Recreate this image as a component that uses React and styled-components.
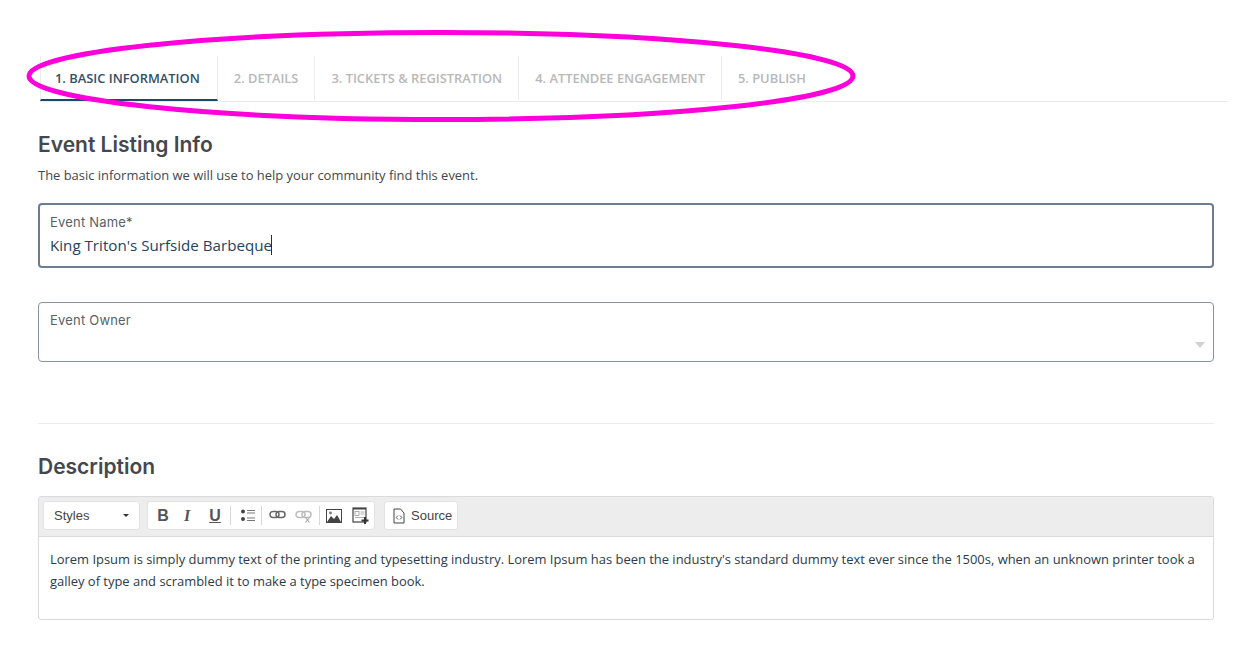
import React from "react";
import styled, { createGlobalStyle } from "styled-components";

const GlobalStyle = createGlobalStyle`
  html, body { margin: 0; padding: 0; background: #fff; }
  body { font-family: "Open Sans", sans-serif; color: #2f3b4a; }
`;

const Page = styled.div`
  position: relative;
  width: 1240px;
  height: 650px;
  overflow: hidden;
  padding: 56px 0 0 38px;
  box-sizing: border-box;
`;

const TabBar = styled.div`
  display: flex;
  width: 1188px;
  height: 46px;
  margin-left: 2px;
  box-sizing: border-box;
  border-bottom: 1px solid #ececec;
`;

const Tab = styled.div`
  height: 45px;
  padding: 1px 16px 0;
  display: flex;
  align-items: center;
  box-sizing: border-box;
  font-size: 12.88px;
  font-weight: 600;
  white-space: nowrap;
  border-right: 1px solid #ececec;
  color: ${(p) => (p.$active ? "#2f4f6b" : "#b8b8b8")};
  border-bottom: 2px solid ${(p) => (p.$active ? "#1d4767" : "transparent")};
  ${(p) => p.$active && "padding-left: 14px; padding-right: 17px; border-left: 1px solid #ececec;"}
  ${(p) => p.$last && "border-right: none;"}
`;

const Content = styled.div`
  width: 1176px;
`;

const Heading = styled.h2`
  font-family: "Inter", sans-serif;
  font-size: 21px;
  line-height: 28px;
  font-weight: 600;
  color: #44484e;
  margin: 29px 0 0;
`;

const Intro = styled.p`
  font-size: 12.94px;
  line-height: 18px;
  margin: 7px 0 0;
  color: #3f4750;
`;

const Field = styled.div`
  position: relative;
  box-sizing: border-box;
  height: ${(p) => (p.$focus ? "65px" : "60px")};
  margin-top: ${(p) => p.$top}px;
  padding: ${(p) => (p.$focus ? "9px 10px" : "9px 11px")};
  border: ${(p) => (p.$focus ? "2px solid #6d7d90" : "1px solid #8794a3")};
  border-radius: 4px;
`;

const FieldLabel = styled.div`
  font-family: "Inter", sans-serif;
  font-size: 13px;
  line-height: 16px;
  letter-spacing: 0.2px;
  color: #5a5f66;
`;

const FieldValue = styled.div`
  display: flex;
  align-items: center;
  font-size: 15.15px;
  line-height: 22px;
  margin-top: 4px;
  color: #23425f;
`;

const Caret = styled.span`
  display: inline-block;
  width: 1px;
  height: 20px;
  margin-left: -1px;
  background: #1c2f44;
`;

const SelectArrow = styled.span`
  position: absolute;
  right: 8px;
  bottom: 13px;
  width: 0;
  height: 0;
  border-left: 5px solid transparent;
  border-right: 5px solid transparent;
  border-top: 6px solid #d0d3d6;
`;

const Rule = styled.hr`
  border: none;
  border-top: 1px solid #ececec;
  margin: 61px 0 0;
`;

const Editor = styled.div`
  margin-top: 15px;
  height: 124px;
  box-sizing: border-box;
  border: 1px solid #d9dbde;
  border-radius: 3px;
  overflow: hidden;
`;

const Toolbar = styled.div`
  display: flex;
  gap: 7px;
  height: 40px;
  box-sizing: border-box;
  padding: 4px;
  background: #ededed;
  border-bottom: 1px solid #d9dbde;
`;

const Group = styled.div`
  display: flex;
  align-items: center;
  height: 29px;
  background: #fff;
  border-radius: 3px;
  border: 1px solid #e2e2e2;
  box-sizing: border-box;
  padding: ${(p) => p.$pad || "0 0 0 4px"};
  margin-left: ${(p) => p.$ml || 0}px;
  width: ${(p) => p.$width};
  font-family: "Liberation Sans", Arial, sans-serif;
  font-size: 13px;
  color: #444;
`;

const StylesLabel = styled.span`
  flex: 1;
`;

const ComboArrow = styled.span`
  width: 0;
  height: 0;
  border-left: 3px solid transparent;
  border-right: 3px solid transparent;
  border-top: 3px solid #333;
`;

const ToolButton = styled.span`
  display: flex;
  align-items: center;
  justify-content: center;
  flex: none;
  box-sizing: border-box;
  width: ${(p) => p.$w}px;
  height: 20px;
  padding: 0 ${(p) => p.$pr || 0}px 0 ${(p) => p.$pl || 0}px;
  font-family: ${(p) => (p.$serif ? '"Liberation Serif", serif' : '"Liberation Sans", Arial, sans-serif')};
  font-size: 16px;
  font-weight: 700;
  font-style: ${(p) => (p.$italic ? "italic" : "normal")};
  text-decoration: ${(p) => (p.$under ? "underline" : "none")};
  color: #555;
`;

const Sep = styled.span`
  flex: none;
  width: 1px;
  height: 19px;
  background: #d8d8d8;
`;

const SourceLabel = styled.span`
  margin-left: 6px;
`;

const EditorBody = styled.div`
  padding: 11px 11px 0;
  font-size: 12.94px;
  line-height: 22px;
  color: #2b3a4c;
`;

const Annotation = styled.svg`
  position: absolute;
  left: 0;
  top: 0;
  pointer-events: none;
`;

function ListIcon() {
  return (
    <svg width="15" height="15" viewBox="0 0 15 15" fill="#444">
      <circle cx="3" cy="3.5" r="2" />
      <circle cx="3" cy="11" r="2" />
      <rect x="7" y="2" width="8" height="1" fill="#777" />
      <rect x="7" y="4.5" width="8" height="1" fill="#777" />
      <rect x="7" y="9.5" width="8" height="1" fill="#777" />
      <rect x="7" y="12" width="8" height="1" fill="#777" />
    </svg>
  );
}

function LinkIcon({ off }) {
  const c = off ? "#bdbdbd" : "#666";
  return (
    <svg width="17" height="15" viewBox="0 0 17 15" fill="none" stroke={c} strokeWidth="1.5">
      <rect x="1" y="3.5" width="9" height="6" rx="3" />
      <rect x="7" y="3.5" width="9" height="6" rx="3" />
      {off && <path d="M10.5 9.5l4 5M14.5 9.5l-4 5" strokeWidth="1.2" stroke="#aaa" />}
    </svg>
  );
}

function ImageIcon() {
  return (
    <svg width="16" height="14" viewBox="0 0 16 14">
      <rect x="0.5" y="0.5" width="15" height="13" fill="#fff" stroke="#444" />
      <path d="M1 13l4-6 3 3 3-4 4 7z" fill="#444" />
      <circle cx="4.5" cy="4" r="1.4" fill="#777" />
    </svg>
  );
}

function BlockIcon() {
  return (
    <svg width="18" height="18" viewBox="0 0 18 18">
      <rect x="1" y="1" width="13" height="14" fill="#fff" stroke="#444" strokeWidth="1.2" />
      <rect x="1" y="1" width="13" height="1.5" fill="#444" />
      <rect x="3" y="4.5" width="4" height="4" fill="none" stroke="#999" strokeWidth="0.8" />
      <path d="M8.5 5h4M8.5 7h4M3 10.5h9" stroke="#999" strokeWidth="0.8" />
      <path d="M13 10v7M9.5 13.5h7" stroke="#333" strokeWidth="2" />
    </svg>
  );
}

function SourceIcon() {
  return (
    <svg width="12" height="16" viewBox="0 0 12 16" fill="none" stroke="#444" strokeWidth="1">
      <path d="M1 1h6.5L11 5v10H1z" />
      <path d="M5 7.5L3.2 9.5 5 11.5M7 7.5l1.8 2L7 11.5" strokeWidth="0.9" />
    </svg>
  );
}

export default function App() {
  return (
    <Page>
      <GlobalStyle />
      <TabBar>
        <Tab $active>1. BASIC INFORMATION</Tab>
        <Tab>2. DETAILS</Tab>
        <Tab>3. TICKETS &amp; REGISTRATION</Tab>
        <Tab>4. ATTENDEE ENGAGEMENT</Tab>
        <Tab $last>5. PUBLISH</Tab>
      </TabBar>
      <Content>
        <Heading>Event Listing Info</Heading>
        <Intro>The basic information we will use to help your community find this event.</Intro>
        <Field $focus $top={19}>
          <FieldLabel>Event Name*</FieldLabel>
          <FieldValue>
            King Triton's Surfside Barbeque
            <Caret />
          </FieldValue>
        </Field>
        <Field $top={34}>
          <FieldLabel>Event Owner</FieldLabel>
          <SelectArrow />
        </Field>
        <Rule />
        <Heading>Description</Heading>
        <Editor>
          <Toolbar>
            <Group $width="97px" $pad="0 10px">
              <StylesLabel>Styles</StylesLabel>
              <ComboArrow />
            </Group>
            <Group>
              <ToolButton $w={22}>B</ToolButton>
              <ToolButton $w={26} $serif $italic>I</ToolButton>
              <ToolButton $w={30} $under>U</ToolButton>
              <Sep />
              <ToolButton $w={30} $pl={2}><ListIcon /></ToolButton>
              <Sep />
              <ToolButton $w={30}><LinkIcon /></ToolButton>
              <ToolButton $w={27} $pr={4}><LinkIcon off /></ToolButton>
              <Sep />
              <ToolButton $w={28}><ImageIcon /></ToolButton>
              <ToolButton $w={26}><BlockIcon /></ToolButton>
            </Group>
            <Group $pad="0 5px 0 8px" $ml={2}>
              <SourceIcon />
              <SourceLabel>Source</SourceLabel>
            </Group>
          </Toolbar>
          <EditorBody>
            Lorem Ipsum is simply dummy text of the printing and typesetting industry. Lorem Ipsum has been the
            industry's standard dummy text ever since the 1500s, when an unknown printer took a galley of type and
            scrambled it to make a type specimen book.
          </EditorBody>
        </Editor>
      </Content>
      <Annotation width="1240" height="650" viewBox="0 0 1240 650">
        <ellipse cx="441" cy="76" rx="412" ry="43.5" fill="none" stroke="#ff00dc" strokeWidth="5" />
      </Annotation>
    </Page>
  );
}
